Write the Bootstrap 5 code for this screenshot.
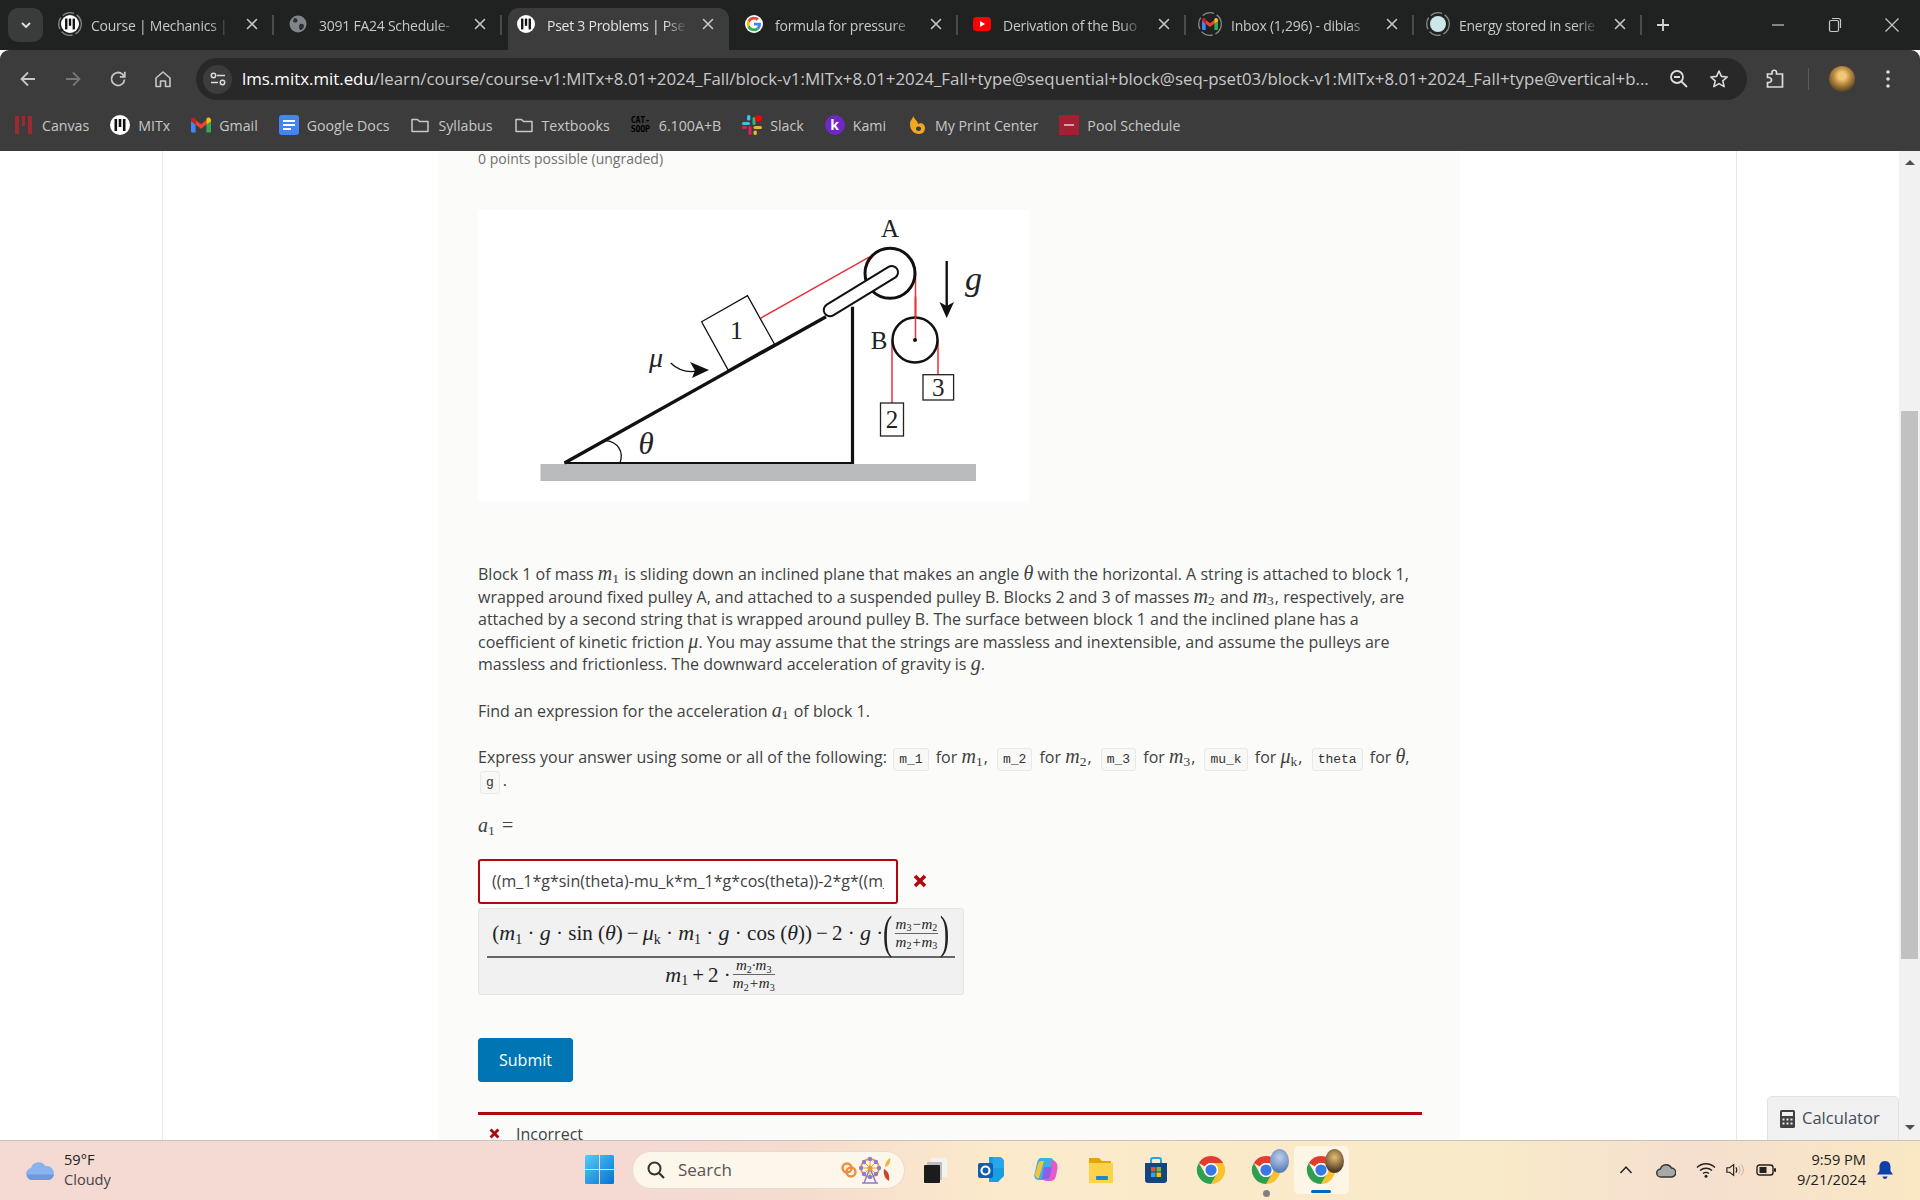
<!DOCTYPE html>
<html lang="en">
<head>
<meta charset="UTF-8">
<title>Pset 3 Problems</title>
<link href="https://cdn.jsdelivr.net/npm/bootstrap@5.3.0/dist/css/bootstrap.min.css" rel="stylesheet">
<style>
html, body { height: 100%; overflow: hidden; }
body { font-family: "Open Sans", "Noto Sans", sans-serif; background: #fff; }
.win { height: 1200px; width: 1920px; }

/* chrome tabs */
.tabstrip { height: 50px; background: #202221; padding-left: 8px; flex: none; }
.tabchev { width: 35px; height: 34px; margin: 8px 4px 0 0; background: #3a3b3b; border-radius: 10px; }
.chtab { width: 228px; height: 50px; padding-left: 14px; padding-bottom: 2px; font-size: 14px; letter-spacing: -.25px; color: #c7c7c7; position: relative; border-right: 2px solid transparent; }
.chtab.sep::after { content: ""; position: absolute; right: -1px; top: 15px; height: 20px; width: 2px; background: #4a4b4b; }
.chtab.current { color: #e3e3e3; }
.chtab.current::before { content: ""; position: absolute; left: 5px; right: 0; top: 8px; bottom: 0; background: #3c3c3c; border-radius: 11px 11px 0 0; }
.chtab > * { position: relative; }
.fav { width: 18px; height: 18px; flex: none; margin-right: 12px; }
.fav.ringed { width: 24px; height: 24px; margin: 0 9px 0 -3px; }
.tabname { width: 140px; margin-top: 2px; flex: none; white-space: nowrap; overflow: hidden; -webkit-mask-image: linear-gradient(90deg, #000 84%, transparent 100%); mask-image: linear-gradient(90deg, #000 84%, transparent 100%); }
.tabx { width: 16px; height: 16px; margin-left: 13px; flex: none; }
.addtab { width: 40px; height: 50px; }
.wctl { width: 57px; height: 50px; }

/* toolbar */
.toolbar { background: #3c3c3c; border-radius: 9px 9px 0 0; flex: none; }
.toolrow { height: 50px; padding: 8px 0 0 5px; }
.navbtn { width: 45px; }
.omni { width: 1551px; height: 42px; margin-left: 11px; background: #282828; border-radius: 21px; padding-left: 7px; }
.omni-chip { width: 29px; height: 29px; border-radius: 50%; background: #3c3c3c; flex: none; margin-right: 10px; }
.urltext { flex: 1; white-space: nowrap; overflow: hidden; font-size: 16.85px; color: #c7c7c7; }
.urltext b { font-weight: 400; color: #fff; }
.omni-end { width: 40px; flex: none; }
.omni-last { width: 48px; flex: none; padding-right: 8px; }
.extslot { width: 68px; height: 22px; border-right: 1px solid #5c5c5c; margin-left: -6px; }
.avaslot { width: 66px; }
.avatar { width: 26px; height: 26px; border-radius: 50%; background: radial-gradient(circle at 50% 38%, #f1c677 0 18%, #b8893f 42%, #4b3a25 80%); }
.dotslot { width: 26px; }
.bookmarks { height: 51px; padding-left: 14px; gap: 21px; font-size: 14.2px; color: #c7c7c7; }
.bmicon { width: 20px; height: 20px; margin-right: 8px; flex: none; }
.catsoop { width: 20px; font: 700 8.4px/9px "DejaVu Sans Mono", monospace; color: #000; margin-right: 8px; letter-spacing: -.3px; }
.kami { width: 20px; height: 20px; border-radius: 50%; background: #7127c4; color: #fff; font: 700 14px/20px "Open Sans", sans-serif; text-align: center; margin-right: 8px; }

/* page */
.pagearea { height: 989px; position: relative; overflow: hidden; flex: none; }
.gutter-l { width: 163px; border-right: 1px solid #e8e8e8; flex: none; }
.gutter-m { width: 275px; flex: none; }
.coursecol { width: 1022px; flex: none; background: #fbfbf9; padding-left: 40px; color: #414141; font-size: 16px; line-height: 22.5px; }
.gutter-r { width: 277px; border-right: 1px solid #e8e8e8; flex: none; }
.gutter-e { flex: 1; }
.ptsline { font-size: 14px; line-height: 16px; color: #707070; }
.diagram { display: block; width: 551px; height: 291px; margin-top: 43px; background: #fff; }
.probtext { white-space: nowrap; margin: 0; }
.problock1 { margin-top: 62px; }
.problock { margin-top: 24px; }
.mi { font-family: "Liberation Serif", serif; font-style: italic; font-size: 20px; line-height: 1; }
.mi sub { font-size: 13.5px; font-style: normal; bottom: -.2em; margin-right: 1px; }
.mi-r { font-family: "Liberation Serif", serif; font-size: 20px; line-height: 1; margin-left: 2px; }
.chip { font-family: "Liberation Mono", monospace; font-size: 13px; line-height: 1; color: #333; background: #f8f8f6; border: 1px solid #e8e8e6; border-radius: 3px; padding: 3px 5px; margin: 0 3px 0 5px; }
.chip.lead-chip { margin-left: 2px; }
.answerrow { margin-top: 21px; height: 45px; }
.answerbox { width: 420px; height: 45px; border: 2px solid #b20610; border-radius: 3px; padding: 0 12px; font-size: 16px; color: #414141; background: #fff; }
.answerbox:focus { border-color: #b20610; box-shadow: none; color: #414141; }
.errx { width: 14px; height: 14px; margin-left: 15px; }
.preview { width: 486px; height: 87px; margin-top: 4px; background: #f1f1f1; border: 1px solid #e4e4e4; border-radius: 3px; padding-left: 8px; color: #222; font-family: "Liberation Serif", serif; font-size: 21px; line-height: 1; }
.pv-frac { width: 468px; }
.pv-num { height: 45px; white-space: nowrap; }
.pv-den { height: 36px; white-space: nowrap; border-top: 2px solid #666; }
.pv-i { font-style: italic; font-size: 22px; }
.pv-i sub, .pv-s sub { font-size: 14px; font-style: normal; bottom: -.25em; }
.pv-small { font-size: 15px; line-height: 1; margin: 0 2px; }
.pv-small > div:first-child { border-bottom: 1px solid #666; padding: 0 1px 1px; }
.pv-small > div:last-child { padding-top: 1px; }
.pv-small sub { font-size: 10px; font-style: normal; }
.pv-paren { font-size: 46px; font-weight: 400; line-height: 40px; transform: scaleX(.6); display: inline-block; margin: 0 -3px; }
.pv-op { margin: 0 4px; }
.submitbtn { display: block; width: 95px; height: 44px; margin-top: 43px; padding: 0; background: #0075b4; border-color: #0075b4; border-radius: 3px; font-size: 16px; color: #fff; }
.resultline { width: 944px; height: 3px; margin-top: 30px; background: #b20610; }
.resultmsg { margin-top: 8px; padding-left: 11px; }
.resultmsg svg { width: 11px; height: 11px; margin-right: 16px; }
.rail { width: 21px; flex: none; background: #f1f1f1; padding-top: 9px; }
.arrup { width: 0; height: 0; border: 5px solid transparent; border-top: 0; border-bottom-color: #505050; }
.arrdn { width: 0; height: 0; border: 5px solid transparent; border-bottom: 0; border-top-color: #505050; margin-top: auto; margin-bottom: 10px; }
.thumb { width: 17px; height: 548px; background: #c1c1c1; margin-top: 246px; }
.calctab { position: absolute; right: 21px; bottom: 0; width: 132px; height: 44px; background: #f0f0f0; border: 1px solid #e2e2e2; border-bottom: 0; border-radius: 5px 5px 0 0; font-size: 16.5px; color: #414b55; padding-left: 12px; }
.calctab svg { width: 15px; height: 18px; margin-right: 7px; }

/* taskbar */
.taskbar { height: 60px; flex: none; padding-bottom: 2px; border-top: 1px solid #c8c2b8; background: linear-gradient(90deg, #f5d9d3 0, #f5d9d3 35%, #f6dccf 42%, #fbeacb 52%, #f9eac9 78%, #f5dfcf 88%, #f9e8c3 100%); color: #222; font-size: 14.6px; line-height: 20px; }
.weather { width: 585px; padding-left: 25px; flex: none; }
.weather svg { width: 30px; height: 22px; margin-right: 9px; }
.weather small { font-size: 14.6px; color: #444; display: block; }
.weathertext { margin-bottom: 2px; }
.winlogo { width: 29px; height: 29px; flex: none; margin-right: 18px; }
.searchpill { width: 273px; height: 38px; flex: none; border-radius: 19px; background: #fdf6ea; border: 1px solid #e8dccb; padding-left: 14px; font-size: 17px; color: #555; margin-right: 3.5px; }
.searchpill svg.mag { width: 18px; height: 18px; margin-right: 13px; }
.searchart { width: 56px; height: 28px; margin-left: auto; margin-right: 8px; }
.tbslot { width: 55px; height: 48px; flex: none; }
.tbslot svg { width: 30px; height: 30px; }
.tbslot.openapp { position: relative; }
.tbslot.running { background: #fdf5e6; border-radius: 5px; }
.openmark { position: absolute; left: 50%; bottom: 1px; width: 20px; height: 3px; margin-left: -10px; background: #0067c0; border-radius: 2px; }
.openmark.idle { width: 7px; height: 7px; margin-left: -3.5px; bottom: -3px; border-radius: 50%; background: #808080; }
.tbbadge { position: absolute; left: 31px; top: 3px; width: 19px; height: 24px; border-radius: 50%; background: radial-gradient(circle at 50% 35%, #bcd0ee, #5d7fb8 75%); }
.tbbadge.gold { background: radial-gradient(circle at 50% 35%, #e9bd70, #4b3a25 75%); }
.tray { margin-left: auto; padding-right: 16px; }
.t40 { width: 40px; }
.t18 { width: 18px; }
.t44 { width: 44px; }
.t78 { width: 78px; text-align: right; white-space: nowrap; margin-bottom: 2px; }
.t38 { width: 38px; }
</style>
</head>
<body>
<svg width="0" height="0" class="position-absolute">
  <defs>
    <symbol id="mitlogo" viewBox="0 0 20 20"><circle cx="10" cy="10" r="10" fill="#fff"/><rect x="4.5" y="4" width="2.6" height="12" fill="#111"/><rect x="8.7" y="4" width="2.6" height="8" fill="#111"/><rect x="12.9" y="4" width="2.6" height="12" fill="#111"/></symbol>
    <symbol id="chromeicon" viewBox="0 0 32 32"><path fill="#e33b2e" d="M16 1a15 15 0 0 1 13 7.5H16a7.5 7.5 0 0 0-6.5 3.75L3 8.5A15 15 0 0 1 16 1z"/><path fill="#fbc02d" d="M29 8.5A15 15 0 0 1 16 31l6.500-11.250A7.500 7.500 0 0 0 16 8.500z"/><path fill="#2e9e4f" d="M3 8.500l6.500 11.250a7.500 7.500 0 0 0 13 0L16 31A15 15 0 0 1 3 8.500z"/><circle cx="16" cy="16" r="7.500" fill="#fff"/><circle cx="16" cy="16" r="6" fill="#3b78e7"/></symbol>
    <symbol id="folderic" viewBox="0 0 20 20"><path d="M2 4.500h5.500l2 2H18v10H2z" fill="none" stroke="#c7c7c7" stroke-width="1.500" stroke-linejoin="round"/></symbol>
    <symbol id="gmailm" viewBox="0 0 24 18"><path fill="#4285f4" d="M0 3v13.500A1.500 1.500 0 0 0 1.500 18h4V8.500z"/><path fill="#34a853" d="M24 3v13.500a1.500 1.500 0 0 1-1.500 1.500h-4V8.500z"/><path fill="#ea4335" d="M5.500 8.500V3L12 8l6.500-5v5.500L12 13.500z"/><path fill="#c5221f" d="M0 3c0-2.400 2.700-3.800 4.700-2.300l.8.700v7.100L0 4.400z"/><path fill="#fbbc04" d="M18.500 8.500V1.400l.8-.7C21.300-.8 24 .6 24 3v1.400z"/></symbol>
    <symbol id="closex" viewBox="0 0 16 16"><path d="M3.500 3.500l9 9m0-9l-9 9" stroke="#c7c7c7" stroke-width="1.600" stroke-linecap="round"/></symbol>
    <symbol id="redx" viewBox="0 0 14 14"><path d="M2 2l10 10M12 2L2 12" stroke="#b20610" stroke-width="3.600"/></symbol>
  </defs>
</svg>

<div class="win d-flex flex-column">
  <!-- tab strip -->
  <div class="tabstrip d-flex align-items-start">
    <div class="tabchev d-flex align-items-center justify-content-center">
      <svg width="12" height="12" viewBox="0 0 12 12"><path d="M2 4l4 4 4-4" fill="none" stroke="#e3e3e3" stroke-width="1.800"/></svg>
    </div>
    <div class="chtab sep d-flex align-items-center">
      <svg class="fav ringed" viewBox="0 0 24 24"><use href="#mitlogo" x="3" y="3" width="18" height="18"/><circle cx="12" cy="12" r="11.300" fill="none" stroke="#8a8a8a" stroke-width="1.300" stroke-dasharray="12 3"/></svg>
      <span class="tabname">Course | Mechanics |</span>
      <svg class="tabx"><use href="#closex"/></svg>
    </div>
    <div class="chtab sep d-flex align-items-center">
      <svg class="fav" viewBox="0 0 18 18"><circle cx="9" cy="9" r="8.500" fill="#80858a"/><path d="M5 3c2 0 4 1 3.500 3S5 8 4 6.500zM11 9c2-.5 4 .5 4 2s-2 4-3.500 4-2-4.500-.5-6z" fill="#2c2e30"/></svg>
      <span class="tabname">3091 FA24 Schedule-</span>
      <svg class="tabx"><use href="#closex"/></svg>
    </div>
    <div class="chtab current d-flex align-items-center">
      <svg class="fav"><use href="#mitlogo"/></svg>
      <span class="tabname">Pset 3 Problems | Pse</span>
      <svg class="tabx"><use href="#closex"/></svg>
    </div>
    <div class="chtab sep d-flex align-items-center">
      <svg class="fav" viewBox="0 0 52 52"><circle cx="26" cy="26" r="26" fill="#fff"/><g transform="translate(5 5) scale(.875)"><path fill="#EA4335" d="M24 9.500c3.540 0 6.710 1.220 9.210 3.600l6.850-6.850C35.900 2.380 30.470 0 24 0 14.620 0 6.510 5.380 2.560 13.220l7.980 6.190C12.430 13.720 17.740 9.500 24 9.500z"/><path fill="#4285F4" d="M46.980 24.550c0-1.570-.15-3.090-.38-4.550H24v9.020h12.940c-.58 2.960-2.260 5.480-4.780 7.180l7.730 6c4.510-4.180 7.090-10.360 7.090-17.650z"/><path fill="#FBBC05" d="M10.530 28.590c-.48-1.450-.76-2.990-.76-4.590s.27-3.140.76-4.590l-7.980-6.190C.92 16.460 0 20.120 0 24c0 3.880.92 7.540 2.560 10.780l7.970-6.190z"/><path fill="#34A853" d="M24 48c6.480 0 11.930-2.130 15.890-5.810l-7.730-6c-2.150 1.450-4.920 2.300-8.160 2.300-6.260 0-11.570-4.220-13.470-9.910l-7.980 6.190C6.510 42.620 14.620 48 24 48z"/></g></svg>
      <span class="tabname">formula for pressure</span>
      <svg class="tabx"><use href="#closex"/></svg>
    </div>
    <div class="chtab sep d-flex align-items-center">
      <svg class="fav" viewBox="0 0 18 18"><rect y="2" width="18" height="14" rx="3.500" fill="#f00"/><path d="M7 6l5 3-5 3z" fill="#fff"/></svg>
      <span class="tabname">Derivation of the Buo</span>
      <svg class="tabx"><use href="#closex"/></svg>
    </div>
    <div class="chtab sep d-flex align-items-center">
      <svg class="fav ringed" viewBox="0 0 24 24"><circle cx="12" cy="12" r="11.300" fill="none" stroke="#8a8a8a" stroke-width="1.300" stroke-dasharray="12 3"/><use href="#gmailm" x="4" y="6" width="16" height="12"/></svg>
      <span class="tabname">Inbox (1,296) - dibias</span>
      <svg class="tabx"><use href="#closex"/></svg>
    </div>
    <div class="chtab sep d-flex align-items-center">
      <svg class="fav ringed" viewBox="0 0 24 24"><circle cx="12" cy="12" r="11.300" fill="none" stroke="#8a8a8a" stroke-width="1.300" stroke-dasharray="12 3"/><circle cx="12" cy="12" r="8" fill="#cfe6e8"/></svg>
      <span class="tabname">Energy stored in serie</span>
      <svg class="tabx"><use href="#closex"/></svg>
    </div>
    <div class="addtab d-flex align-items-center justify-content-center">
      <svg width="16" height="16" viewBox="0 0 16 16"><path d="M8 2v12M2 8h12" stroke="#d5d5d5" stroke-width="1.800"/></svg>
    </div>
    <div class="ms-auto d-flex">
      <div class="wctl d-flex align-items-center justify-content-center"><svg width="14" height="14" viewBox="0 0 14 14"><path d="M1 7h12" stroke="#c7c7c7" stroke-width="1.200"/></svg></div>
      <div class="wctl d-flex align-items-center justify-content-center"><svg width="14" height="16" viewBox="0 0 14 16"><rect x="1.500" y="3.500" width="9" height="11" rx="1.500" fill="none" stroke="#c7c7c7" stroke-width="1.200"/><path d="M4 1.500h6.500a2 2 0 0 1 2 2V11" fill="none" stroke="#c7c7c7" stroke-width="1.200"/></svg></div>
      <div class="wctl d-flex align-items-center justify-content-center"><svg width="16" height="16" viewBox="0 0 16 16"><path d="M1.500 1.500l13 13m0-13l-13 13" stroke="#c7c7c7" stroke-width="1.200"/></svg></div>
    </div>
  </div>

  <!-- toolbar and bookmarks -->
  <div class="toolbar">
    <div class="toolrow d-flex align-items-center">
      <div class="navbtn d-flex justify-content-center"><svg width="18" height="18" viewBox="0 0 18 18"><path d="M16 9H2.500M9 2.500L2.500 9 9 15.500" fill="none" stroke="#c7c7c7" stroke-width="1.800"/></svg></div>
      <div class="navbtn d-flex justify-content-center"><svg width="18" height="18" viewBox="0 0 18 18"><path d="M2 9h13.500M9 2.500L15.500 9 9 15.500" fill="none" stroke="#777" stroke-width="1.800"/></svg></div>
      <div class="navbtn d-flex justify-content-center"><svg width="18" height="18" viewBox="0 0 18 18"><path d="M15.500 9.500A6.500 6.500 0 1 1 13.400 4.200L15.500 6.500M15.800 1.800v5h-5" fill="none" stroke="#c7c7c7" stroke-width="1.800"/></svg></div>
      <div class="navbtn d-flex justify-content-center"><svg width="18" height="18" viewBox="0 0 18 18"><path d="M2 8l7-6 7 6v8.500h-4.500V11h-5v5.500H2z" fill="none" stroke="#c7c7c7" stroke-width="1.600" stroke-linejoin="round"/></svg></div>
      <div class="omni d-flex align-items-center">
        <div class="omni-chip d-flex align-items-center justify-content-center">
          <svg width="16" height="14" viewBox="0 0 16 14"><path d="M7 3.500h8M1 10.500h7" stroke="#dcdcdc" stroke-width="1.500"/><circle cx="3.500" cy="3.500" r="2.200" fill="none" stroke="#dcdcdc" stroke-width="1.500"/><circle cx="12.500" cy="10.500" r="2.200" fill="none" stroke="#dcdcdc" stroke-width="1.500"/></svg>
        </div>
        <div class="urltext"><b>lms.mitx.mit.edu</b>/learn/course/course-v1:MITx+8.01+2024_Fall/block-v1:MITx+8.01+2024_Fall+type@sequential+block@seq-pset03/block-v1:MITx+8.01+2024_Fall+type@vertical+b...</div>
        <div class="omni-end d-flex justify-content-center"><svg width="20" height="20" viewBox="0 0 20 20"><circle cx="8" cy="8" r="6" fill="none" stroke="#dcdcdc" stroke-width="1.800"/><path d="M12.500 12.500l5.500 5.500M5 8h6" stroke="#dcdcdc" stroke-width="1.800"/></svg></div>
        <div class="omni-last d-flex justify-content-center"><svg width="20" height="20" viewBox="0 0 20 20"><path d="M10 2l2.400 5.400 5.800.6-4.400 3.900 1.300 5.700-5.100-3-5.100 3 1.300-5.700L1.800 8l5.800-.6z" fill="none" stroke="#dcdcdc" stroke-width="1.600" stroke-linejoin="round"/></svg></div>
      </div>
      <div class="extslot d-flex align-items-center justify-content-center"><svg width="20" height="22" viewBox="0 0 20 22"><path d="M2 5h4.500V3.500a2 2 0 0 1 4.500 0V5H17v13H2v-4.500h1.500a2.500 2.500 0 0 0 0-5H2z" transform="translate(.5 1)" fill="none" stroke="#dcdcdc" stroke-width="1.700"/></svg></div>
      <div class="avaslot d-flex justify-content-center"><div class="avatar"></div></div>
      <div class="dotslot d-flex justify-content-center"><svg width="6" height="20" viewBox="0 0 6 20"><circle cx="3" cy="3" r="1.800" fill="#dcdcdc"/><circle cx="3" cy="10" r="1.800" fill="#dcdcdc"/><circle cx="3" cy="17" r="1.800" fill="#dcdcdc"/></svg></div>
    </div>
    <div class="bookmarks d-flex align-items-center">
      <div class="d-flex align-items-center"><svg class="bmicon" viewBox="0 0 20 20"><path d="M1 1h4v18H1zM8 1h3v10H8zM14 1h4v18h-4z" fill="#9b2b2e"/></svg>Canvas</div>
      <div class="d-flex align-items-center"><svg class="bmicon"><use href="#mitlogo"/></svg>MITx</div>
      <div class="d-flex align-items-center"><svg class="bmicon"><use href="#gmailm"/></svg>Gmail</div>
      <div class="d-flex align-items-center"><svg class="bmicon" viewBox="0 0 20 20"><rect width="20" height="20" rx="3" fill="#4285f4"/><path d="M4 6h12M4 10h12M4 14h8" stroke="#fff" stroke-width="2"/></svg>Google Docs</div>
      <div class="d-flex align-items-center"><svg class="bmicon"><use href="#folderic"/></svg>Syllabus</div>
      <div class="d-flex align-items-center"><svg class="bmicon"><use href="#folderic"/></svg>Textbooks</div>
      <div class="d-flex align-items-center"><div class="catsoop">CAT-<br>SOOP</div>6.100A+B</div>
      <div class="d-flex align-items-center"><svg class="bmicon" viewBox="0 0 20 20"><rect x="0" y="7" width="8" height="3" rx="1.500" fill="#36c5f0"/><rect x="5" y="0" width="3.400" height="5.500" rx="1.500" fill="#36c5f0"/><rect x="10.500" y="2" width="3" height="8" rx="1.500" fill="#2eb67d"/><circle cx="16.500" cy="3.500" r="3.300" fill="#f00"/><rect x="11.500" y="11" width="8.500" height="3" rx="1.500" fill="#ecb22e"/><rect x="11.500" y="15.500" width="3.400" height="4.500" rx="1.500" fill="#ecb22e"/><rect x="6.500" y="11" width="3" height="9" rx="1.500" fill="#e01e5a"/><rect x="0" y="11" width="5" height="3" rx="1.500" fill="#e01e5a"/></svg>Slack</div>
      <div class="d-flex align-items-center"><div class="kami">k</div>Kami</div>
      <div class="d-flex align-items-center"><svg class="bmicon" viewBox="0 0 20 20"><path d="M6 1c0 3-3 4-3 8 0 6 4 10 9 10 4 0 6-3 6-6 0-4-4-6-7-4 0-3-3-4-5-8z" fill="#efa81f"/><path d="M9 13c1-2 4-2 5 0 .5 2-1 3-2.500 3S8.500 15 9 13z" fill="#3c3c3c"/></svg>My Print Center</div>
      <div class="d-flex align-items-center"><svg class="bmicon" viewBox="0 0 20 20"><rect width="20" height="20" fill="#a31f34"/><path d="M5 10h10" stroke="#e8dcdc" stroke-width="1.400"/></svg>Pool Schedule</div>
    </div>
  </div>

  <!-- page -->
  <div class="pagearea d-flex">
    <div class="gutter-l"></div>
    <div class="gutter-m"></div>
    <div class="coursecol">
      <div class="ptsline">0 points possible (ungraded)</div>
      <svg class="diagram" viewBox="0 0 551 291">
        <rect x="62.500" y="254" width="435.500" height="17" fill="#b9babb"/>
        <path d="M86.500 253H374.500" stroke="#111" stroke-width="2"/>
        <path d="M86.500 253L348 106.700" stroke="#111" stroke-width="3.400"/>
        <path d="M374.500 96.700V254" stroke="#111" stroke-width="3.200"/>
        <path d="M128 230.700C140 232 146 242 142 252.700" fill="none" stroke="#111" stroke-width="1.300"/>
        <path d="M283 108L392 46.700M437.500 63V130M414 130V193M460 130V164.700" fill="none" stroke="#e8323c" stroke-width="1.500"/>
        <circle cx="412" cy="63.300" r="25" fill="#fff" stroke="#111" stroke-width="3"/>
        <path d="M352 100L413.800 62.300" stroke="#111" stroke-width="14.500" stroke-linecap="round"/>
        <path d="M352 100L413.800 62.300" stroke="#fff" stroke-width="10.500" stroke-linecap="round"/>
        <path d="M437.500 86V130" stroke="#e8323c" stroke-width="1.500"/>
        <circle cx="437" cy="130" r="22.500" fill="#fff" stroke="#111" stroke-width="2.500"/>
        <path d="M437.500 88V130" stroke="#e8323c" stroke-width="1.500"/>
        <circle cx="437" cy="130" r="2" fill="#111"/>
        <path d="M223.600 111.700L269.500 85.700 296.400 134 250.200 160z" fill="#fff" stroke="#111" stroke-width="1.300"/>
        <rect x="402.500" y="193" width="23" height="33" fill="#fff" stroke="#222" stroke-width="1.300"/>
        <rect x="445" y="164.700" width="30.600" height="25.300" fill="#fff" stroke="#222" stroke-width="1.300"/>
        <path d="M468.700 51V100" stroke="#111" stroke-width="2.400"/>
        <path d="M461.500 92L468.700 96 476 92 468.700 108z" fill="#111"/>
        <path d="M192.700 153C201 161 212 163 222 160.500" fill="none" stroke="#111" stroke-width="1.300"/>
        <path d="M231 160L212 152 217 160.500 214 168z" fill="#111"/>
        <g font-family="Liberation Serif, serif" fill="#222" text-anchor="middle">
          <text x="412" y="27" font-size="25">A</text>
          <text x="401" y="139" font-size="25">B</text>
          <text x="258.500" y="129" font-size="26">1</text>
          <text x="414" y="218" font-size="25">2</text>
          <text x="460.300" y="186" font-size="25">3</text>
          <text x="168" y="244" font-size="31" font-style="italic">θ</text>
          <text x="178" y="157" font-size="28" font-style="italic">μ</text>
          <text x="495.500" y="80" font-size="34" font-style="italic">g</text>
        </g>
      </svg>

      <p class="probtext problock1">Block 1 of mass <span class="mi">m<sub>1</sub></span> is sliding down an inclined plane that makes an angle <span class="mi">θ</span> with the horizontal. A string is attached to block 1,<br>
      wrapped around fixed pulley A, and attached to a suspended pulley B. Blocks 2 and 3 of masses <span class="mi">m<sub>2</sub></span> and <span class="mi">m<sub>3</sub></span>, respectively, are<br>
      attached by a second string that is wrapped around pulley B. The surface between block 1 and the inclined plane has a<br>
      coefficient of kinetic friction <span class="mi">μ</span>. You may assume that the strings are massless and inextensible, and assume the pulleys are<br>
      massless and frictionless. The downward acceleration of gravity is <span class="mi">g</span>.</p>
      <p class="probtext problock">Find an expression for the acceleration <span class="mi">a<sub>1</sub></span> of block 1.</p>
      <p class="probtext problock">Express your answer using some or all of the following: <span class="chip lead-chip">m_1</span> for <span class="mi">m<sub>1</sub></span>, <span class="chip">m_2</span> for <span class="mi">m<sub>2</sub></span>, <span class="chip">m_3</span> for <span class="mi">m<sub>3</sub></span>, <span class="chip">mu_k</span> for <span class="mi">μ<sub>k</sub></span>, <span class="chip">theta</span> for <span class="mi">θ</span>,<br>
      <span class="chip lead-chip">g</span>.</p>
      <p class="probtext problock"><span class="mi">a<sub>1</sub></span> <span class="mi-r">=</span></p>

      <div class="answerrow d-flex align-items-center">
        <input type="text" class="form-control answerbox" value="((m_1*g*sin(theta)-mu_k*m_1*g*cos(theta))-2*g*((m_3-m_2)/(m_2+m_3)))/(m_1+2*((m_2*m_3)/(m_2+m_3)))">
        <svg class="errx"><use href="#redx"/></svg>
      </div>
      <div class="preview d-flex align-items-center">
        <div class="pv-frac d-flex flex-column align-items-center">
          <div class="pv-num d-flex align-items-center justify-content-center">
            <span class="pv-s">(<span class="pv-i">m<sub>1</sub></span> · <span class="pv-i">g</span> · sin (<span class="pv-i">θ</span>)<span class="pv-op">−</span><span class="pv-i">μ<sub>k</sub></span> · <span class="pv-i">m<sub>1</sub></span> · <span class="pv-i">g</span> · cos (<span class="pv-i">θ</span>))<span class="pv-op">−</span>2 · <span class="pv-i">g</span> · </span>
            <span class="pv-paren">(</span>
            <div class="pv-small text-center fst-italic"><div>m<sub>3</sub>−m<sub>2</sub></div><div>m<sub>2</sub>+m<sub>3</sub></div></div>
            <span class="pv-paren">)</span>
          </div>
          <div class="pv-den d-flex align-items-center justify-content-center w-100">
            <span class="pv-s"><span class="pv-i">m<sub>1</sub></span><span class="pv-op">+</span>2 · </span>
            <div class="pv-small text-center fst-italic"><div>m<sub>2</sub>·m<sub>3</sub></div><div>m<sub>2</sub>+m<sub>3</sub></div></div>
          </div>
        </div>
      </div>

      <button class="btn submitbtn" type="button">Submit</button>
      <div class="resultline"></div>
      <div class="resultmsg d-flex align-items-center"><svg viewBox="0 0 14 14"><use href="#redx"/></svg>Incorrect</div>
    </div>
    <div class="gutter-r"></div>
    <div class="gutter-e"></div>
    <div class="rail d-flex flex-column align-items-center">
      <div class="arrup"></div>
      <div class="thumb"></div>
      <div class="arrdn"></div>
    </div>
    <div class="calctab d-flex align-items-center">
      <svg viewBox="0 0 15 18"><rect width="15" height="18" rx="1.500" fill="#414141"/><rect x="2" y="2" width="11" height="4" fill="#f0f0f0"/><path d="M2.500 8.500h2v2h-2zM6.500 8.500h2v2h-2zM10.500 8.500h2v2h-2zM2.500 12.500h2v2h-2zM6.500 12.500h2v2h-2zM10.500 12.500h2v2h-2z" fill="#f0f0f0"/></svg>
      Calculator
    </div>
  </div>

  <!-- taskbar -->
  <div class="taskbar d-flex align-items-center">
    <div class="weather d-flex align-items-center">
      <svg viewBox="0 0 30 22"><path d="M7 21a6 6 0 0 1-1-11.900A8 8 0 0 1 20.500 7 7 7 0 0 1 23 21z" fill="#8ab2ee"/><path d="M2 15.500h27c-.5 3-3 5.500-6 5.500H7c-2.500 0-4.500-2.500-5-5.500z" fill="#6d98dc"/></svg>
      <div class="weathertext">59°F<small>Cloudy</small></div>
    </div>
    <svg class="winlogo" viewBox="0 0 29 29"><defs><linearGradient id="wg" x1="0" y1="0" x2="1" y2="1"><stop offset="0" stop-color="#52cdf8"/><stop offset="1" stop-color="#0672cf"/></linearGradient></defs><path d="M0 1.500A1.500 1.500 0 0 1 1.500 0H14v14H0zM15 0h12.500A1.500 1.500 0 0 1 29 1.500V14H15zM0 15h14v14H1.500A1.500 1.500 0 0 1 0 27.500zM15 15h14v12.500a1.500 1.500 0 0 1-1.500 1.500H15z" fill="url(#wg)"/></svg>
    <div class="searchpill d-flex align-items-center">
      <svg class="mag" viewBox="0 0 18 18"><circle cx="7.500" cy="7.500" r="6" fill="none" stroke="#333" stroke-width="2"/><path d="M12 12l5 5" stroke="#333" stroke-width="2.200"/></svg>
      Search
      <svg class="searchart" viewBox="0 0 56 28">
        <g fill="none" stroke="#ee8d3a" stroke-width="2.400"><circle cx="7" cy="12" r="4.500"/><circle cx="11" cy="16" r="4.500"/></g>
        <circle cx="30" cy="12" r="9" fill="none" stroke="#ee9c2e" stroke-width="1.800"/>
        <path d="M30 3v18M21 12h18M24 6l12 12M36 6L24 18" stroke="#ee9c2e" stroke-width="1"/>
        <g fill="#8d7cd0"><circle cx="30" cy="3" r="2.200"/><circle cx="30" cy="21" r="2.200"/><circle cx="21" cy="12" r="2.200"/><circle cx="39" cy="12" r="2.200"/><circle cx="24" cy="6" r="2.200"/><circle cx="36" cy="6" r="2.200"/><circle cx="24" cy="18" r="2.200"/><circle cx="36" cy="18" r="2.200"/></g>
        <path d="M30 12l-6 15M30 12l6 15M22 27h16" fill="none" stroke="#8d7cd0" stroke-width="1.500"/>
        <circle cx="30" cy="12" r="2.500" fill="#ef9a22"/>
        <path d="M50 2c1 4-1 8-5 9 0-4 2-7 5-9z" fill="#eeb433"/>
        <path d="M44 13c4 2 6 6 5 12-4-2-6-7-5-12z" fill="#d2442a"/>
      </svg>
    </div>
    <div class="tbslot d-flex align-items-center justify-content-center">
      <svg viewBox="0 0 30 30"><rect x="10" y="3" width="16" height="19" rx="1" fill="#f2f2f2"/><rect x="6" y="7" width="15" height="18" rx="1" fill="#bdbdbd"/><rect x="3" y="10" width="16" height="18" rx="1" fill="#1c1c1c"/></svg>
    </div>
    <div class="tbslot d-flex align-items-center justify-content-center">
      <svg viewBox="0 0 30 30"><path d="M13 2h10a5 5 0 0 1 5 5v14l-6 6H13z" fill="#1b9de2"/><path d="M17 2h7l4 4v7h-11z" fill="#28a8ea"/><rect x="2" y="8" width="15" height="15" rx="2" fill="#0a5fb3"/><circle cx="9.500" cy="15.500" r="4" fill="none" stroke="#fff" stroke-width="2.200"/></svg>
    </div>
    <div class="tbslot d-flex align-items-center justify-content-center">
      <svg viewBox="0 0 30 30"><path d="M10 3h9c3 0 4 3 3.500 5L20 20c-.7 3-3 5-6 5H8c-4 0-5-3-4.500-6L6 8c.5-3 2-5 4-5z" fill="#35b2e6"/><path d="M20 5c4 0 7 3 6.500 8L25 21c-.5 3-3 5-6 5h-7c4-1 7-4 8-8z" fill="#e35bc6"/><path d="M4 19l3-10c.5-2 2-3 3-3h3L8 23c-2 1-4-1-4-4z" fill="#f0c53b"/><path d="M13 12h8l-2 9c-.5 2-2 3-3 3h-5z" fill="#8e5ee8"/></svg>
    </div>
    <div class="tbslot d-flex align-items-center justify-content-center">
      <svg viewBox="0 0 30 30"><path d="M3 3h10l3 3h9v22H3z" fill="#e3a50a"/><path d="M3 8h24v20H3z" fill="#fbd34b"/><rect x="10" y="21" width="12" height="4" rx="1" fill="#1d88d0"/></svg>
    </div>
    <div class="tbslot d-flex align-items-center justify-content-center">
      <svg viewBox="0 0 30 30"><path d="M10 8V5a2 2 0 0 1 2-2h6a2 2 0 0 1 2 2v3" fill="none" stroke="#2aa3e0" stroke-width="2"/><path d="M4 8h22v17a3 3 0 0 1-3 3H7a3 3 0 0 1-3-3z" fill="#14457f"/><rect x="10" y="12" width="4.500" height="4.500" fill="#e8532f"/><rect x="15.500" y="12" width="4.500" height="4.500" fill="#7cba2c"/><rect x="10" y="17.500" width="4.500" height="4.500" fill="#2ca5e8"/><rect x="15.500" y="17.500" width="4.500" height="4.500" fill="#fbbd08"/></svg>
    </div>
    <div class="tbslot d-flex align-items-center justify-content-center"><svg><use href="#chromeicon"/></svg></div>
    <div class="tbslot openapp d-flex align-items-center justify-content-center">
      <svg><use href="#chromeicon"/></svg><div class="tbbadge"></div><div class="openmark idle"></div>
    </div>
    <div class="tbslot openapp running d-flex align-items-center justify-content-center">
      <svg><use href="#chromeicon"/></svg><div class="tbbadge gold"></div><div class="openmark"></div>
    </div>
    <div class="tray d-flex align-items-center">
      <div class="t40 d-flex justify-content-center"><svg width="14" height="10" viewBox="0 0 14 10"><path d="M1.500 8L7 2l5.500 6" fill="none" stroke="#222" stroke-width="1.500"/></svg></div>
      <div class="t40 d-flex justify-content-center"><svg width="20" height="16" viewBox="0 0 20 16"><path d="M5 15a4 4 0 0 1-.6-8A6 6 0 0 1 15.500 6 4.500 4.500 0 0 1 15 15z" fill="#a8a8a8" stroke="#333" stroke-width="1.400"/></svg></div>
      <div class="t40 d-flex justify-content-center"><svg width="20" height="16" viewBox="0 0 20 16"><path d="M1 5.500c5-5 13-5 18 0M4 8.500c3.500-3 8.500-3 12 0M7 11.500c2-1.500 4-1.500 6 0" fill="none" stroke="#222" stroke-width="1.400"/><circle cx="10" cy="14.300" r="1.500" fill="#222"/></svg></div>
      <div class="t18 d-flex justify-content-center"><svg width="20" height="16" viewBox="0 0 20 16"><path d="M1 5.500h3L8.500 2v12L4 10.500H1z" fill="none" stroke="#222" stroke-width="1.300"/><path d="M11 5c1.300 2 1.300 4 0 6" fill="none" stroke="#222" stroke-width="1.300"/><path d="M14 3.500c2 3 2 6 0 9M17 2c3 4 3 8 0 12" fill="none" stroke="#b8ab99" stroke-width="1"/></svg></div>
      <div class="t44 d-flex justify-content-center"><svg width="20" height="12" viewBox="0 0 20 12"><rect x="1" y="1" width="16" height="10" rx="2.500" fill="none" stroke="#222" stroke-width="1.400"/><rect x="3.500" y="3" width="7" height="6" fill="#222"/><rect x="18" y="4" width="2" height="4" rx="1" fill="#222"/></svg></div>
      <div class="t78"><div>9:59 PM</div><div>9/21/2024</div></div>
      <div class="t38 d-flex justify-content-center"><svg width="18" height="20" viewBox="0 0 18 20"><path d="M9 1c4 0 5.500 3 5.500 6v4l2.500 3.500H1L3.500 11V7C3.500 4 5 1 9 1z" fill="#0f3fa8"/><path d="M6.500 16.500h5a2.500 2.500 0 0 1-5 0z" fill="#0f3fa8"/></svg></div>
    </div>
  </div>
</div>
<script src="https://cdn.jsdelivr.net/npm/bootstrap@5.3.0/dist/js/bootstrap.bundle.min.js"></script>
</body>
</html>
